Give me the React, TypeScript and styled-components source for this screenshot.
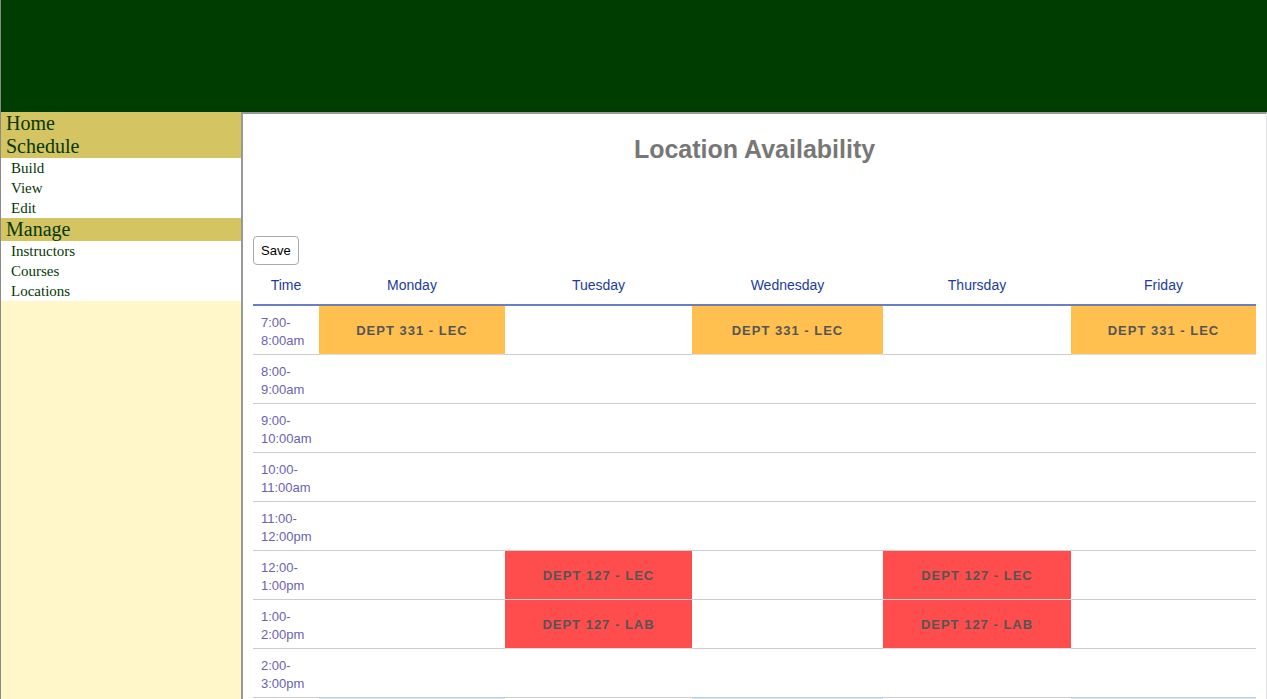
import React from "react";
import styled, { createGlobalStyle } from "styled-components";

const Global = createGlobalStyle`
  html, body { margin: 0; padding: 0; overflow: hidden; background: #fff; }
  * { box-sizing: border-box; }
`;

const Page = styled.div`
  border-left: 1px solid #8a8a8a;
  min-height: 699px;
  display: flex;
  flex-direction: column;
`;

const Header = styled.header`
  height: 112px;
  background: #003d00;
  flex-shrink: 0;
`;

const Body = styled.div`
  display: flex;
  flex: 1;
`;

const Sidebar = styled.nav`
  width: 240px;
  flex-shrink: 0;
  background: #fff6ca;
  font-family: "Liberation Serif", "Times New Roman", serif;
  color: #053805;
`;

const Section = styled.div`
  background: #d4c462;
  height: 23px;
  line-height: 23px;
  font-size: 20px;
  padding-left: 5px;
`;

const SubItem = styled.div`
  background: #fff;
  height: 20px;
  line-height: 20px;
  font-size: 15px;
  padding-left: 10px;
`;

const Content = styled.main`
  flex: 1;
  background: #fff;
  border-top: 2px solid #999;
  border-left: 2px solid #999;
  border-right: 1px solid #e4e4e4;
  padding: 0 10px;
  font-family: "Liberation Sans", Arial, sans-serif;
`;

const Title = styled.h1`
  margin: 20px 0 72px;
  height: 30px;
  line-height: 30px;
  font-size: 25px;
  font-weight: bold;
  color: #777;
  text-align: center;
`;

const SaveButton = styled.button`
  display: block;
  height: 29px;
  padding: 0 7px;
  border: 1px solid #aaa;
  border-radius: 4px;
  background: #fff;
  font-family: "Liberation Sans", Arial, sans-serif;
  font-size: 13px;
  color: #000;
`;

const Table = styled.table`
  margin-top: 7px;
  width: 1003px;
  table-layout: fixed;
  border-collapse: separate;
  border-spacing: 0;
`;

const Th = styled.th`
  height: 34px;
  padding: 0 0 6px;
  border-bottom: 2px solid #6a7fbf;
  font-weight: normal;
  font-size: 14px;
  color: #1c3c9c;
  text-align: center;
  vertical-align: middle;
`;

const TimeCell = styled.td`
  height: 49px;
  padding: 3px 8px 0;
  border-bottom: 1px solid #cccccc;
  font-size: 13px;
  line-height: 18px;
  color: #6a62b2;
  vertical-align: middle;
`;

const Cell = styled.td<{ $kind?: "orange" | "red" | "blue"; $soft?: boolean }>`
  height: 49px;
  padding: 0;
  border-bottom: 1px solid
    ${(p) => (p.$soft ? "#f6d2d2" : p.$kind ? "#dcdcdc" : "#cccccc")};
  background: ${(p) =>
    p.$kind === "orange"
      ? "#ffc04f"
      : p.$kind === "red"
      ? "#ff4d4d"
      : p.$kind === "blue"
      ? "#cfe4ec"
      : "#fff"};
  font-size: 13px;
  font-weight: bold;
  letter-spacing: 1px;
  color: #555;
  text-align: center;
  vertical-align: middle;
`;

type Slot = { kind: "orange" | "red" | "blue"; text: string; soft?: boolean } | null;

const days = ["Monday", "Tuesday", "Wednesday", "Thursday", "Friday"];
const widths = [66, 186, 187, 191, 188, 185];

const O: Slot = { kind: "orange", text: "DEPT 331 - LEC" };
const RL: Slot = { kind: "red", text: "DEPT 127 - LEC", soft: true };
const RB: Slot = { kind: "red", text: "DEPT 127 - LAB" };
const B: Slot = { kind: "blue", text: "" };

const rows: { t1: string; t2: string; slots: Slot[] }[] = [
  { t1: "7:00-", t2: "8:00am", slots: [O, null, O, null, O] },
  { t1: "8:00-", t2: "9:00am", slots: [null, null, null, null, null] },
  { t1: "9:00-", t2: "10:00am", slots: [null, null, null, null, null] },
  { t1: "10:00-", t2: "11:00am", slots: [null, null, null, null, null] },
  { t1: "11:00-", t2: "12:00pm", slots: [null, null, null, null, null] },
  { t1: "12:00-", t2: "1:00pm", slots: [null, RL, null, RL, null] },
  { t1: "1:00-", t2: "2:00pm", slots: [null, RB, null, RB, null] },
  { t1: "2:00-", t2: "3:00pm", slots: [null, null, null, null, null] },
  { t1: "3:00-", t2: "4:00pm", slots: [B, null, B, null, B] },
];

export default function App() {
  return (
    <>
      <Global />
      <Page>
        <Header />
        <Body>
          <Sidebar>
            <Section>Home</Section>
            <Section>Schedule</Section>
            <SubItem>Build</SubItem>
            <SubItem>View</SubItem>
            <SubItem>Edit</SubItem>
            <Section>Manage</Section>
            <SubItem>Instructors</SubItem>
            <SubItem>Courses</SubItem>
            <SubItem>Locations</SubItem>
          </Sidebar>
          <Content>
            <Title>Location Availability</Title>
            <SaveButton>Save</SaveButton>
            <Table>
              <colgroup>
                {widths.map((w, i) => (
                  <col key={i} style={{ width: w }} />
                ))}
              </colgroup>
              <thead>
                <tr>
                  <Th>Time</Th>
                  {days.map((d) => (
                    <Th key={d}>{d}</Th>
                  ))}
                </tr>
              </thead>
              <tbody>
                {rows.map((r) => (
                  <tr key={r.t1}>
                    <TimeCell>
                      {r.t1}
                      <br />
                      {r.t2}
                    </TimeCell>
                    {r.slots.map((s, i) => (
                      <Cell key={i} $kind={s?.kind} $soft={s?.soft}>
                        {s?.text}
                      </Cell>
                    ))}
                  </tr>
                ))}
              </tbody>
            </Table>
          </Content>
        </Body>
      </Page>
    </>
  );
}
